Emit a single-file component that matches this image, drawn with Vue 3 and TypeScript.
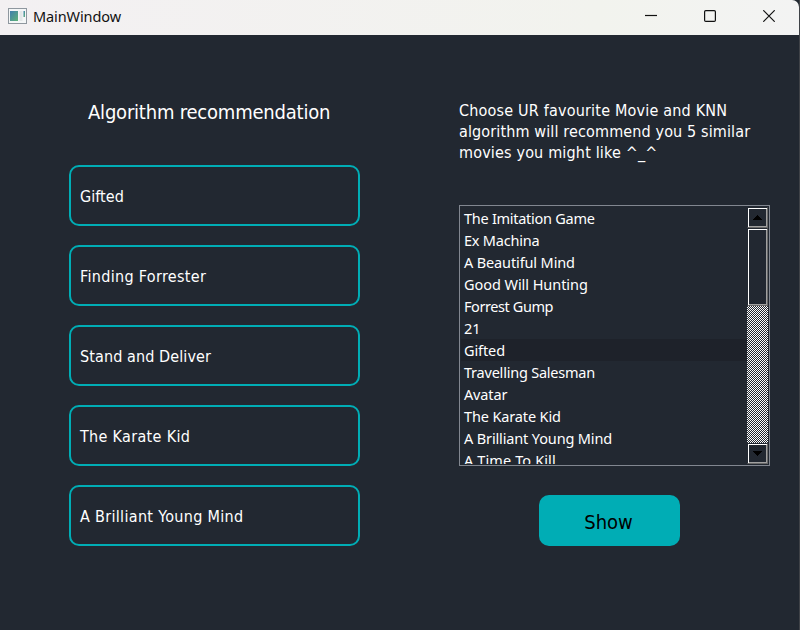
<script setup lang="ts">
import { ref } from 'vue'

interface Label {
  text: string
  tracking: number
}

const recommendations: Label[] = [
  { text: 'Gifted', tracking: 0.05 },
  { text: 'Finding Forrester', tracking: 0.32 },
  { text: 'Stand and Deliver', tracking: 0.1 },
  { text: 'The Karate Kid', tracking: 0.32 },
  { text: 'A Brilliant Young Mind', tracking: 0.32 },
]

const intro: Label[] = [
  { text: 'Choose UR favourite Movie and KNN', tracking: 0.19 },
  { text: 'algorithm will recommend you 5 similar', tracking: 0.13 },
  { text: 'movies you might like ^_^', tracking: 0.17 },
]

const movies: Label[] = [
  { text: 'The Imitation Game', tracking: -0.27 },
  { text: 'Ex Machina', tracking: -0.22 },
  { text: 'A Beautiful Mind', tracking: -0.13 },
  { text: 'Good Will Hunting', tracking: -0.06 },
  { text: 'Forrest Gump', tracking: -0.42 },
  { text: '21', tracking: 0 },
  { text: 'Gifted', tracking: -0.1 },
  { text: 'Travelling Salesman', tracking: -0.22 },
  { text: 'Avatar', tracking: -0.15 },
  { text: 'The Karate Kid', tracking: -0.14 },
  { text: 'A Brilliant Young Mind', tracking: -0.14 },
  { text: 'A Time To Kill', tracking: 0.12 },
]

const selected = ref('Gifted')

const spacing = (label: Label) => ({ letterSpacing: `${label.tracking}px` })
</script>

<template>
  <div class="window">
    <header class="titlebar">
      <svg class="app-icon" width="19" height="16" viewBox="0 0 19 16">
        <defs>
          <linearGradient id="pane" x1="0" y1="0" x2="1" y2="1">
            <stop offset="0" stop-color="#3f7fae" />
            <stop offset="1" stop-color="#5fb277" />
          </linearGradient>
        </defs>
        <rect x="0.5" y="0.5" width="18" height="15" fill="#f4f6f7" stroke="#8f979f" />
        <rect x="2" y="3" width="8" height="10" fill="url(#pane)" />
        <rect x="11.500" y="3" width="3" height="10" fill="#e3e7e8" />
        <rect x="15.500" y="3" width="1.500" height="6" fill="url(#pane)" />
      </svg>
      <span class="title">MainWindow</span>
      <div class="controls">
        <svg width="12" height="12" viewBox="0 0 12 12"><path d="M0 5.500H12" /></svg>
        <svg width="12" height="12" viewBox="0 0 12 12">
          <rect x="0.600" y="0.600" width="10.800" height="10.800" rx="1.200" />
        </svg>
        <svg width="12" height="12" viewBox="0 0 12 12"><path d="M0.300 0.300L11.700 11.700M11.700 0.300L0.300 11.700" /></svg>
      </div>
    </header>

    <main class="content">
      <section class="left">
        <h1 class="heading">Algorithm recommendation</h1>
        <div v-for="item in recommendations" :key="item.text" class="card">
          <span :style="spacing(item)">{{ item.text }}</span>
        </div>
      </section>

      <section class="right">
        <div class="intro">
          <div v-for="line in intro" :key="line.text" :style="spacing(line)">{{ line.text }}</div>
        </div>
        <div class="listbox">
          <ul class="items">
            <li
              v-for="movie in movies"
              :key="movie.text"
              :class="{ selected: movie.text === selected }"
              :style="spacing(movie)"
              @click="selected = movie.text"
            >{{ movie.text }}</li>
          </ul>
          <div class="scrollbar">
            <div class="bevel arrow">
              <svg width="9" height="5" viewBox="0 0 9 5" shape-rendering="crispEdges"><path d="M4 0h1v1h1v1h1v1h1v1h1v1H0V4h1V3h1V2h1V1h1z" /></svg>
            </div>
            <div class="bevel thumb"></div>
            <div class="track"></div>
            <div class="bevel arrow">
              <svg width="9" height="5" viewBox="0 0 9 5" shape-rendering="crispEdges"><path d="M0 0h9v1H8v1H7v1H6v1H5v1H4V4H3V3H2V2H1V1H0z" /></svg>
            </div>
          </div>
        </div>
        <button class="show" type="button">Show</button>
      </section>
    </main>
  </div>
</template>

<style>
body {
  margin: 0;
  background: #222831;
}
</style>

<style scoped>
.window {
  display: flex;
  flex-direction: column;
  box-sizing: border-box;
  width: 800px;
  height: 630px;
  overflow: hidden;
  border-right: 1px solid #3f4247;
  background: #222831;
  color: #fff;
  font-family: "DejaVu Sans Condensed", "DejaVu Sans", "Noto Sans", sans-serif;
  font-stretch: condensed;
}
.titlebar {
  display: flex;
  align-items: center;
  flex: none;
  box-sizing: border-box;
  height: 35px;
  padding: 0 24px 3px 8px;
  border-top-right-radius: 7px;
  background: linear-gradient(90deg, #f3f0f2, #f2f3ee 75%, #f3f3f3);
  color: #111;
}
.title {
  margin-left: 6px;
  font: 14.500px/20px "Noto Sans", "Open Sans", sans-serif;
  letter-spacing: -0.1px;
}
.controls {
  display: flex;
  gap: 47px;
  margin-left: auto;
}
.controls svg {
  fill: none;
  stroke: #111;
  stroke-width: 1.200;
}
.content {
  display: flex;
  flex: 1;
  padding: 61px 29px 0 69px;
}
.left {
  width: 291px;
}
.heading {
  margin: 1px 0 37px 19px;
  font-size: 20px;
  line-height: 31px;
  font-weight: 400;
  letter-spacing: -0.21px;
  white-space: nowrap;
}
.card {
  display: flex;
  align-items: center;
  box-sizing: border-box;
  height: 61px;
  margin-bottom: 19px;
  padding: 2px 0 0 9px;
  border: 2px solid #00adb5;
  border-radius: 10px;
  font-size: 16px;
}
.right {
  display: flex;
  flex-direction: column;
  width: 311px;
  margin-left: 99px;
}
.intro {
  height: 63px;
  margin: 4px 0 42px;
  font-size: 16px;
  line-height: 21px;
  white-space: nowrap;
}
.listbox {
  display: flex;
  box-sizing: border-box;
  height: 261px;
  padding: 1px;
  border: 1px solid #828790;
}
.items {
  flex: 1;
  margin: 0;
  padding: 0;
  overflow: hidden;
  list-style: none;
  font: 14.500px/22px "Noto Sans", "Open Sans", sans-serif;
}
.items li {
  height: 22px;
  padding-left: 3px;
}
.items .selected {
  background: #1e222a;
}
.scrollbar {
  display: flex;
  flex-direction: column;
  width: 21px;
}
.bevel {
  box-sizing: border-box;
  border: 1px solid;
  border-color: #222831 #696969 #696969 #222831;
  box-shadow: inset 1px 1px #fff, inset -1px -1px #a0a0a0;
}
.arrow {
  display: flex;
  align-items: center;
  justify-content: center;
  height: 21px;
}
.thumb {
  height: 78px;
}
.track {
  flex: 1;
  background: repeating-conic-gradient(#fff 0 25%, #222831 0 50%) 0 0 / 2px 2px;
}
.show {
  align-self: center;
  width: 141px;
  height: 51px;
  margin: 29px 10px 0 0;
  padding: 2px 2px 0 0;
  border: 0;
  border-radius: 10px;
  background: #00adb5;
  color: #000;
  font-family: inherit;
  font-size: 20px;
  font-stretch: condensed;
}
</style>
